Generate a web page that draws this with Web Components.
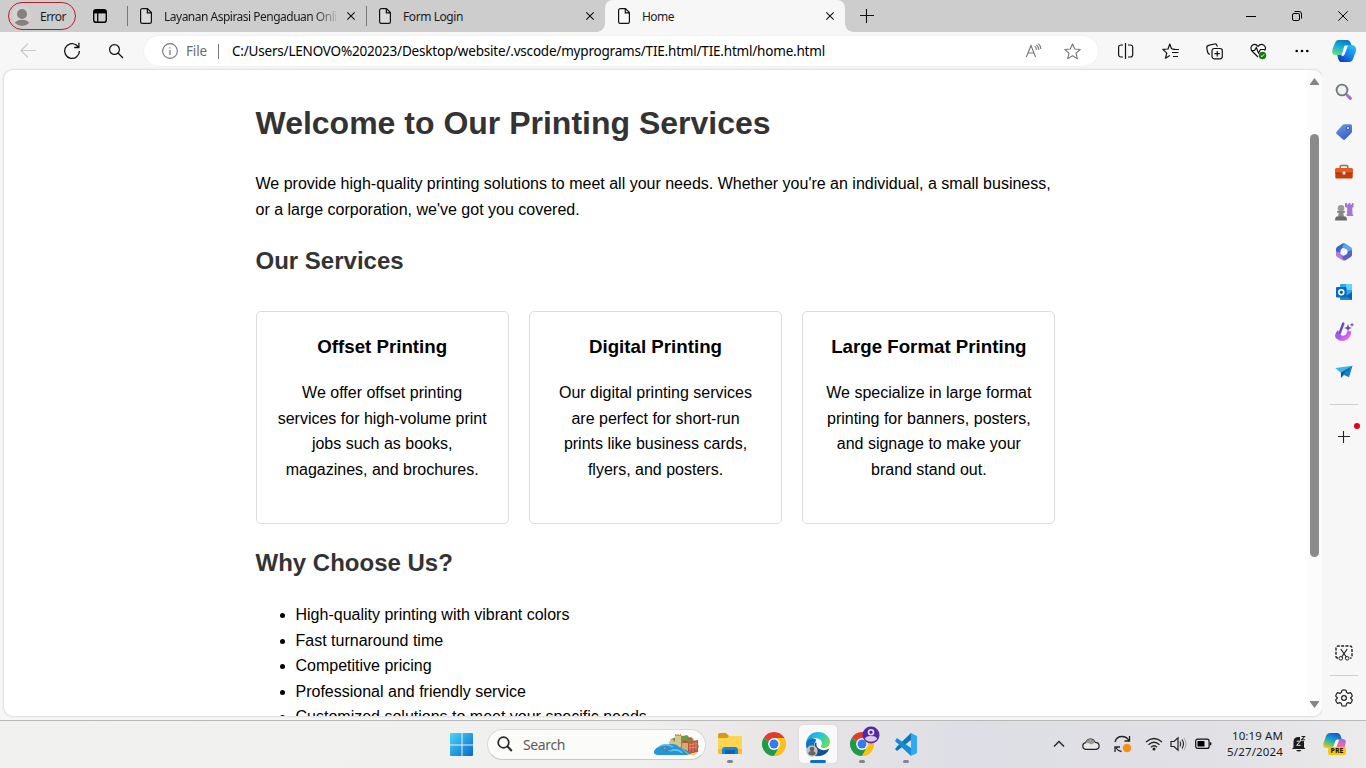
<!DOCTYPE html>
<html lang="en">
<head>
<meta charset="utf-8">
<title>Home</title>
<style>
html,body{margin:0;height:100%;overflow:hidden;background:#f7f7f7}
body{font-family:"Noto Sans","Open Sans",sans-serif;color:#1b1b1b}
</style>
</head>
<body>
<desktop-shell></desktop-shell>
<script>
const ICONS = {
  person: [28,28,`<defs><clipPath id="c"><circle cx="14" cy="14" r="10"/></clipPath></defs><circle cx="14" cy="14" r="10" fill="#d5d2cf"/><g fill="#85817e" clip-path="url(#c)"><circle cx="14" cy="12" r="5"/><ellipse cx="14" cy="22" rx="7.300" ry="4.200"/></g>`],
  tabs: [16,16,`<rect x="1.700" y="1.700" width="12.600" height="12.600" rx="2.400" fill="none" stroke="#000" stroke-width="1.400"/><path d="M2 2h12v3.400H2z"/><path d="M5.700 5v9" stroke="#000" stroke-width="1.300"/>`],
  file: [12,16,`<path d="M2.200.6h5.200l4 4v9.100a1.700 1.700 0 0 1-1.700 1.700H2.300A1.700 1.700 0 0 1 .6 13.700V2.300A1.700 1.700 0 0 1 2.300.6M7.300.8v4h4" fill="#fff" fill-opacity=".3" stroke="#111" stroke-width="1.200"/>`],
  close: [8,8,`<path d="M.3.3l7.400 7.400M7.700.3L.3 7.700" stroke="#111" stroke-width="1.100"/>`],
  wclose: [10,10,`<path d="M.3.3l9.400 9.400M9.700.3L.3 9.700" stroke="#000" stroke-width="1"/>`],
  plus: [14,14,`<path d="M0 6.500h14M6.500 0v14" stroke="#111" stroke-width="1.100"/>`],
  min: [10,10,`<path d="M0 5.500h10" stroke="#000"/>`],
  restore: [10,10,`<rect x=".5" y="2.500" width="7" height="7" rx="1.500" fill="none" stroke="#000"/><path d="M2.500.5H7A2.500 2.500 0 0 1 9.500 3v4.500" fill="none" stroke="#000"/>`],
  back: [16,16,`<path d="M16 7.500H1M8 .5L1 7.500l7 7" fill="none" stroke="#c9c9c9" stroke-width="1.100"/>`],
  reload: [18,18,`<path d="M16.400 9A7.400 7.400 0 1 1 13.300 3M15.900.8v4.700h-4.700M13 2.800l2.800 2.600" fill="none" stroke="#111" stroke-width="1.300"/>`],
  search: [16,16,`<circle cx="6.500" cy="6.500" r="4.900" fill="none" stroke="#111" stroke-width="1.200"/><path d="M10 10l5 5" stroke="#111" stroke-width="1.300"/>`],
  info: [16,16,`<circle cx="8" cy="8" r="7.400" fill="none" stroke="#777" stroke-width="1.100"/><path d="M8 7v5M8 4.200v1.400" stroke="#777" stroke-width="1.200"/>`],
  read: [16,16,`<path d="M1.300 14L6 2.500 10.600 14M3 10h6.200M9.800 3.200q1.700 1.400 1.600 3.800M11.500 1.900q2.400 2 2.300 5.100M13.300.6q2.500 2 2.500 5.400" fill="none" stroke="#777" stroke-width="1.100"/>`],
  star: [17,17,`<path d="M8.500 1l2.200 5 5.500.5-4.200 3.700 1.300 5.400-4.800-2.900-4.800 2.900L5 10.200.8 6.500 6.300 6z" fill="none" stroke="#777" stroke-width="1.100" stroke-linejoin="round"/>`],
  split: [16,16,`<path d="M5 2H3A2.200 2.200 0 0 0 .6 4.200v7.600A2.200 2.200 0 0 0 3 14h2M10 2h2.500a2.200 2.200 0 0 1 2.200 2.200v7.600A2.200 2.200 0 0 1 12.500 14H10M7.500 0v16" fill="none" stroke="#111" stroke-width="1.200"/>`],
  favs: [17,17,`<path d="M9.600 6L7.800 1 6 6 .8 6.400l4 3.700L3.500 15.200 7.800 12.500M9.600 6l3 .2M11 6.500h6M10 9.500h6.500M11 13.500H16" fill="none" stroke="#111" stroke-width="1.200" stroke-linejoin="round"/>`],
  collect: [17,17,`<rect x="6" y="5.500" width="10.300" height="10.300" rx="2.200" fill="none" stroke="#111" stroke-width="1.200"/><path d="M11.200 8v5.400M8.500 10.700h5.400M3.800 11.500Q2 10.700 1.600 9L.8 5Q.5 3 2.600 2.400L8.500 1q2-.4 2.600 1.700l.3.900" fill="none" stroke="#111" stroke-width="1.200"/>`],
  heart: [17,17,`<path d="M8 14L2 8C-1.500 3.500 4.500-1 8 3.300 11.500-1 18 3.500 14.500 7.500M1 7.500h3.500L6.300 4.600 8.500 10l2-3.500H15" fill="none" stroke="#111" stroke-width="1.200"/><circle cx="12.500" cy="12.500" r="3.700" fill="#107c10"/><path d="M10.900 12.700l1.100 1 2.200-2.400" fill="none" stroke="#fff"/>`],
  dots: [14,4,`<circle cx="1.700" cy="2" r="1.300"/><circle cx="7" cy="2" r="1.300"/><circle cx="12.300" cy="2" r="1.300"/>`],
  copilot: [24,24,`<defs><linearGradient id="a" x1=".6" y1="0" x2=".2" y2="1"><stop stop-color="#0878c8"/><stop offset=".45" stop-color="#13afd2"/><stop offset="1" stop-color="#6bdf83"/></linearGradient><linearGradient id="b" x1=".9" y1="0" x2=".2" y2="1"><stop stop-color="#29c5f4"/><stop offset=".6" stop-color="#1679e9"/><stop offset="1" stop-color="#1235c7"/></linearGradient></defs><path d="M6 1h9q3 0 4 4l1 2h-5q-2 0-3 3l-2 6H4Q-1 16 .5 10L3 4q1-3 3-3z" fill="url(#a)"/><path d="M16 6h4q5 1 4 6l-3 8q-1 3-4 3H9q-2 0-3-4l-.6-3H10q2 0 3-3l1.400-5z" fill="url(#b)"/><path d="M13 6.500h3l-3.500 9q-.5 1.500-3 1.500l2-7.500q.4-2 1.500-3z" fill="#fff"/>`],
  sbsearch: [18,18,`<circle cx="7" cy="7" r="5.400" fill="#eef3f6" stroke="#777" stroke-width="1.900"/><path d="M10.800 10.800l2 2" stroke="#777" stroke-width="2"/><path d="M12.700 12.700l2.700 2.700" stroke="#a56bd5" stroke-width="3" stroke-linecap="round"/>`],
  tag: [18,18,`<defs><linearGradient id="a" x2=".5" y2="1"><stop stop-color="#6b9bf0"/><stop offset="1" stop-color="#3c62c8"/></linearGradient></defs><path d="M9.500 1.200h6q1.500 0 1.500 1.500v5.700q0 1-.8 1.800l-6 6q-1.200 1-2.400 0L1.700 11q-1.300-1.300 0-2.600L7.600 2q.8-.8 1.900-.8z" fill="url(#a)"/><circle cx="13" cy="5" r="1.500" fill="#fff" stroke="#263b80" stroke-width=".8"/>`],
  tools: [18,16,`<path d="M5.200 4V2.500q0-1 1-1h5.600q1 0 1 1V4" fill="none" stroke="#777" stroke-width="1.500"/><rect x=".3" y="4" width="17.400" height="10.600" rx="1.500" fill="#cc3b0b"/><path d="M.3 5.500Q.3 4 1.800 4h14.400q1.500 0 1.500 1.500V9H.3z" fill="#e95b1c"/><path d="M.3 9h17.400" stroke="#a83009"/><circle cx="9" cy="9" r="1.700" fill="#bcecf5"/>`],
  chess: [20,20,`<path d="M11 1h2v1.500h1.500V1h2v1.500H18V1h1.500v4l-1.200.8.200 6.200 1 2h-7l.5-2 .3-6.200L11 5z" fill="#a374d9"/><circle cx="7" cy="6.300" r="3.300" fill="#999"/><path d="M3 9h8v1.500l-1.700.5.700 4H4l.7-4L3 10.500z" fill="#878787"/><path d="M2.300 14.500h9.400q1.300 1 1.300 4H1q0-3 1.300-4z" fill="#6a6a6a"/>`],
  m365: [18,18,`<path d="M7.500.6L2.200 3.800Q1 4.600 1 6v5.500q2 .6 4.200-1L5.500 8q0-1.700 1.500-2.500l5.500-3.200L10 .6Q8.700 0 7.500.6z" fill="#3d63cf"/><path d="M10.500.8L16 4.300q1 .8 1 2V9q-1.500 1.800-4.500 1V8q0-1-1-1.700L7.500 4.500q-.5-2.500 3-3.700z" fill="#58a9ec"/><path d="M1 8.500V12q0 1.200 1.200 2l5.300 3.300q1.200.7 2.500 0l1.500-1q-1-2.800-3.500-4L6 11.300Q4.500 8 1 8.500z" fill="#b07ddc"/><path d="M17 7.500V12q0 1.200-1.200 2L10 17.400q-2.500-.8-3-3.700l4.500-2.400q1-.6 1-1.800Q14 7 17 7.500z" fill="#5961c2"/><circle cx="9" cy="9" r="2.700" fill="#f7f7f7"/>`],
  outlook: [18,18,`<path d="M6 1h10q1 0 1 1v14H5V2q0-1 1-1z" fill="#2aa9e8"/><path d="M11 1h5q1 0 1 1v5h-6z" fill="#63d5fa"/><path d="M5 9l7 4 5-4v7q0 1-1 1H6q-1 0-1-1z" fill="#168bd6"/><path d="M17 9l-6 4 6 4z" fill="#0b5fb0"/><rect x="1" y="4" width="10.500" height="10.500" rx="1" fill="#0869bd"/><circle cx="6.300" cy="9.200" r="2.500" fill="none" stroke="#fff" stroke-width="1.500"/>`],
  design: [20,20,`<defs><linearGradient id="a" x1="0" y1="0" x2="1" y2="1"><stop stop-color="#8146dc"/><stop offset=".5" stop-color="#c455ee"/><stop offset="1" stop-color="#ef8af8"/></linearGradient></defs><path d="M4 8Q-.5 12.500 2.500 16.500q4.500 4.300 10.500 1.300 4.500-3 4-8.800l-4 .5q0 3-2.500 4T5 12z" fill="url(#a)"/><path d="M9.300 1.500L5.500 11.500" stroke="#6547d6" stroke-width="2.400" stroke-linecap="round"/><circle cx="4" cy="14" r="2.800" fill="#a05fe4"/><path d="M14 2l1 2.900 2.900 1-2.900 1L14 9.800l-1-2.900-2.900-1 2.900-1zM18 .5l.6 1.700 1.700.6-1.700.6L18 5.100l-.6-1.700-1.700-.6 1.700-.6z" fill="#6046b9"/>`],
  plane: [18,16,`<path d="M.3 4L17.500 1.800 6 9z" fill="#37b8e7"/><path d="M17.500 1.800L6 8.500V14l3-3 5 2.300z" fill="#1681c9"/><path d="M17.500 1.800L6 9v5l2.500-5z" fill="#0a4f89"/>`],
  sbplus: [12,12,`<path d="M0 5.500h12M5.500 0v12" stroke="#222" stroke-width="1.100"/>`],
  snip: [18,18,`<path d="M3 14H2.500Q1 14 1 12.500V4.500Q1 2 3.500 2h11Q17 2 17 4.500v8q0 1.500-1.500 1.500H15" fill="none" stroke="#222" stroke-width="1.400" stroke-dasharray="3 1.300"/><path d="M5.800 5l5.500 8M12.200 5l-5.500 8" stroke="#222" stroke-width="1.200"/><circle cx="5.800" cy="14.300" r="1.800" fill="none" stroke="#222"/><circle cx="12.200" cy="14.300" r="1.800" fill="none" stroke="#222"/>`],
  gear: [18,18,`<path d="M7 1.200Q9 .5 11 1.200l.7 2.400 1.300.8 2.500-.7Q17 5.300 17.300 7.200L15.500 9l1.800 1.800q-.3 2-1.800 3.500l-2.500-.7-1.300.8-.7 2.400q-2 .7-4 0l-.7-2.400-1.300-.8-2.500.7Q1 12.800.7 10.800L2.500 9 .7 7.200Q1 5.200 2.500 3.700l2.500.7 1.300-.8z" fill="none" stroke="#222" stroke-width="1.200" stroke-linejoin="round"/><circle cx="9" cy="9" r="2.400" fill="none" stroke="#222" stroke-width="1.200"/>`],
  start: [24,24,`<defs><linearGradient id="a" gradientUnits="userSpaceOnUse" x1="0" y1="0" x2="24" y2="24"><stop stop-color="#4dd4fb"/><stop offset="1" stop-color="#0065c8"/></linearGradient></defs><path d="M1 0h10.500v11.500H0V1q0-1 1-1zM12.500 0H22q1 0 1 1v10.500H12.500zM0 12.500h11.500V23H1q-1 0-1-1zM12.500 12.500H23V22q0 1-1 1h-9.500z" fill="url(#a)"/>`],
  tsearch: [16,16,`<circle cx="6.500" cy="6.500" r="5.300" fill="none" stroke="#292929" stroke-width="1.700"/><path d="M10.300 10.300l4.500 4.700" stroke="#292929" stroke-width="2"/>`],
  scene: [48,24,`<path d="M16 11l2-5 5-2 4-2 3 1 4-1 4 4 6 3 2 5-5 5H20z" fill="#6d9a46"/><path d="M16 9l3-3 3 3v4h-6zM22 3h6v11h-6z" fill="#d9c28c"/><path d="M22 3V1h1.500v1h1V1H26v1h1V1h1v2z" fill="#ba9c68"/><path d="M29 10h8v8h-8z" fill="#d2aa72"/><path d="M28 10l4-3 5 3zM34 6l4-2 3 3z" fill="#c05235"/><path d="M35 9l10-2v12l-10 2z" fill="#c44f36"/><path d="M36 12l8-1.500M36 15l8-1M37 9.500v9M40 9v10M43 8.500v9" stroke="#f0bc95" stroke-width=".5"/><path d="M1 18Q5 11 19 11q5 0 7 3l9 4 5 4-3 0H6q-6 0-5-4z" fill="#2196d8"/><path d="M24 12l12 9q8 0 10-3-3 5-7 4l-3 0z" fill="#edca74"/><path d="M7 13q7-3 13 1M17 18q8-3 12 2" fill="none" stroke="#67c5ec" stroke-width="1.500"/><path d="M9 15l5-1-2 2zM13 18l5-1.500-2 2z" fill="#fff" stroke="#555" stroke-width=".6"/>`],
  folder: [26,24,`<path d="M1 3q0-2 2-2h6l3 3h11q2 0 2 2v4H1z" fill="#d79b13"/><path d="M1 6h9l2-2h11q2 0 2 2v15q0 1-2 1H3q-2 0-2-1z" fill="#ffd455"/><path d="M1 17h24v4q0 1-2 1H3q-2 0-2-1z" fill="#f5bc32"/><path d="M5 18q0-3 3-3h10q3 0 3 3v4H5z" fill="#1685d8"/><path d="M8 18h10v4H8z" fill="#0865ad"/>`],
  chrome: [24,24,`<path d="M12 12L1.600 6A12 12 0 0 1 22.400 6z" fill="#e33b2e"/><path d="M12 12L22.400 6A12 12 0 0 1 12 24z" fill="#fbc116"/><path d="M1.600 6A12 12 0 0 0 12 24L17.200 15 12 12z" fill="#229a4a"/><path d="M12 6h10.400A12 12 0 0 1 12 24l5.200-9z" fill="#fbc116"/><circle cx="12" cy="12" r="5.900" fill="#fff"/><circle cx="12" cy="12" r="4.500" fill="#327cf0"/>`],
  edge: [26,26,`<defs><linearGradient id="a" x1="0" x2="1" y2=".6"><stop stop-color="#1598dd"/><stop offset=".5" stop-color="#26c2df"/><stop offset="1" stop-color="#68df57"/></linearGradient></defs><path d="M1 14C1 5 7 1 13 1c7 0 12 5 12 10 0 6-9 8-9 4 0-1 1-1 1-3 0-2-3-5-7-5-5 0-8 3-9 7z" fill="url(#a)"/><path d="M1 14C1 8 7 6 10 8c3 1-1 3-1 7 0 5 5 9 8 9-9 4-16-3-16-10z" fill="#0876c4"/><path d="M10 12q-3 9 4 13 7 0 10.500-7.500-5 3-9 1-5-2-4-7z" fill="#154d91"/><circle cx="7" cy="20" r="5.700" fill="#c2c2c2"/><circle cx="7" cy="18" r="2.300" fill="#6b625e"/><path d="M3.300 23q0-3 3.700-3t3.700 3q-3.500 3-7.400 0z" fill="#6b625e"/>`],
  badge: [18,18,`<circle cx="9" cy="9" r="8.500" fill="#5228a4"/><circle cx="9" cy="6.200" r="2.500" fill="#5228a4" stroke="#e9dcff" stroke-width="1.600"/><path d="M3 13.200q0-3.200 6-3.200t6 3.200q-6 5-12 0z" fill="#d9c8f0"/>`],
  code: [25,25,`<path d="M17 1L3 14.500 1 17l2 2L17 8z" fill="#0878bd"/><path d="M3 6l14 10v8L1 9z" fill="#118fd6"/><path d="M17 1l6 3v17l-6 3z" fill="#30a9f2"/>`],
  chev: [12,8,`<path d="M1 6.500L6 1.500l5 5" fill="none" stroke="#222" stroke-width="1.400"/>`],
  cloud: [18,14,`<path d="M4 12.300Q.7 12 .8 8.700.9 6.300 3.600 5.700q2-4.500 6-3.500 2.500.5 3.500 3.200 4 0 4 3.700-.2 3.200-3.500 3.200z" fill="#e9e9e9" stroke="#222" stroke-width="1.200"/><path d="M3.500 6Q5.500 1.500 9 2q3 .5 4 3.500l-3.500 2Q7.500 5.500 3.500 6z" fill="#999"/>`],
  sync: [20,20,`<path d="M2 8Q3.500 2.500 9 2.500q4.500 0 7 4M16.500 2v5h-5M8.500 17.500q-3.500-.5-5.500-3.500M2 18v-5h5" fill="none" stroke="#222" stroke-width="1.300"/><circle cx="14" cy="14" r="4.200" fill="#f7910c"/>`],
  wifi: [18,14,`<g fill="none" stroke="#222" stroke-width="1.300"><path d="M1 5q8-7 16 0M3.500 7.800q5.500-5 11 0M6 10.200q3-2.800 6 0"/></g><circle cx="9" cy="12" r="1.500" fill="#222"/>`],
  volume: [17,16,`<path d="M1 5.500h3l4-3.700v12.400l-4-3.700H1z" fill="none" stroke="#222" stroke-width="1.200"/><path d="M10 5.500q1.500 2.500 0 5M12 3.500q3 4.500 0 9" fill="none" stroke="#222" stroke-width="1.100"/><path d="M14 1.800q4 6 0 12.400" fill="none" stroke="#aaa"/>`],
  battery: [17,12,`<rect x=".7" y="1.200" width="13.400" height="9.200" rx="2" fill="none" stroke="#111" stroke-width="1.200"/><rect x="2.500" y="3" width="7" height="5.600" rx=".7"/><path d="M15.500 4.300v3" stroke="#111" stroke-width="1.600"/>`],
  bell: [16,18,`<path d="M1 14l1.500-1.800V7q0-5 5-5H9v4h4v6.200l1.500 1.800z" fill="#1c1c1c"/><path d="M5 15h5.500q-2.700 3-5.500 0z" fill="#1c1c1c"/><path d="M5.700 6.200h3.500L5.700 10.300h4" fill="none" stroke="#fff" stroke-width=".9"/><path d="M10.500 1.500h3l-3 3.300h3.500" fill="none" stroke="#222" stroke-width="1.100"/>`],
  copilotpre: [26,26,`<defs><linearGradient id="a" x1=".7" x2=".2" y2="1"><stop stop-color="#1454d0"/><stop offset=".4" stop-color="#1299d5"/><stop offset=".7" stop-color="#58c472"/><stop offset="1" stop-color="#f1c42d"/></linearGradient><linearGradient id="b" x1=".6" x2=".2" y2="1"><stop stop-color="#a965ed"/><stop offset=".5" stop-color="#ed68a4"/><stop offset="1" stop-color="#ff8b50"/></linearGradient></defs><path d="M8 2h7q3 0 4 4l.7 2H16q-2 0-3 3l-2 6H4q-4 0-2.500-5L4 5q1-3 4-3z" fill="url(#a)"/><path d="M16 8h4q5 0 3.500 5l-1.500 5H7l3-1q2 0 3-3z" fill="url(#b)"/><path d="M14 9h3l-3 8h-3z" fill="#fff"/>`]
};
function define(name, html, setup){
  const t=document.createElement('template'); t.innerHTML=html;
  customElements.define(name, class extends HTMLElement{
    constructor(){ super(); this.attachShadow({mode:'open'}).append(t.content.cloneNode(true)); }
    connectedCallback(){ if(setup) setup(this,this.shadowRoot); }
  });
}
define('ui-icon','<style>:host{display:inline-flex;flex:none}svg{display:block;overflow:visible}</style><span></span>',(el,root)=>{
  const [w,h,body]=ICONS[el.getAttribute('name')];
  root.querySelector('span').innerHTML=`<svg width="${w}" height="${h}" viewBox="0 0 ${w} ${h}">${body}</svg>`;
});
/* A one-line label whose tracking is set so that it spans a given width. */
define('fit-label','<style>:host{display:inline-block;white-space:nowrap;flex:none}</style><span><slot></slot></span>',(el,root)=>{
  const span=root.querySelector('span'), n=el.textContent.length;
  span.style.letterSpacing=(Number(el.getAttribute('span'))-span.getBoundingClientRect().width)/n+'px';
});
define('browser-tab',`<style>
:host{display:flex;box-sizing:border-box;width:239px;height:32px;align-items:center;padding:0 11px 0 12px;font-size:12px;position:relative;border-left:1px solid transparent}
:host([rule])::before{content:"";position:absolute;left:-1px;top:6px;height:20px;border-left:1px solid #777}
:host([active]){width:240px;background:#f7f7f7;border-radius:8px 8px 0 0}
:host([active])::before,:host([active])::after{content:"";position:absolute;bottom:0;width:8px;height:8px}
:host([active])::before{left:-9px;background:radial-gradient(circle at 0 0,transparent 7.500px,#f7f7f7 8px)}
:host([active])::after{right:-8px;background:radial-gradient(circle at 100% 0,transparent 7.500px,#f7f7f7 8px)}
.t{flex:1;margin:0 11px 0 12px;overflow:hidden;white-space:nowrap}
:host([fade]) .t{-webkit-mask-image:linear-gradient(90deg,#000 150px,transparent 176px)}
</style><ui-icon name="file"></ui-icon><div class="t"><slot></slot></div><ui-icon name="close"></ui-icon>`);
define('tab-strip',`<style>
:host{display:flex;height:32px;background:#cdcdcd;align-items:center}
.pill{box-sizing:border-box;width:68px;height:28px;border:1px solid #b51f2b;border-radius:14px;margin-left:8px;display:flex;align-items:center;font-size:12px}
.pill ui-icon{margin-left:-1px}.pill fit-label{margin-left:4px}
.act{width:48px;margin-right:3px;display:flex;justify-content:center}
.plus{width:43px;display:flex;justify-content:center}
.win{margin-left:auto;display:flex}.win span{width:46px;display:flex;justify-content:center}
</style><div class="pill"><ui-icon name="person"></ui-icon><fit-label span="26">Error</fit-label></div><div class="act"><ui-icon name="tabs"></ui-icon></div>
<browser-tab rule fade><fit-label span="186">Layanan Aspirasi Pengaduan Online</fit-label></browser-tab><browser-tab rule><fit-label span="60">Form Login</fit-label></browser-tab><browser-tab active><fit-label span="32">Home</fit-label></browser-tab>
<div class="plus"><ui-icon name="plus"></ui-icon></div><div class="win"><span><ui-icon name="min"></ui-icon></span><span><ui-icon name="restore"></ui-icon></span><span><ui-icon name="wclose"></ui-icon></span></div>`);
define('nav-bar',`<style>
:host{display:flex;height:38px;background:#f7f7f7;align-items:center;padding-left:6px}
.c{width:44px;display:flex;justify-content:center;flex:none}.last{width:40px}
.addr{box-sizing:border-box;width:954px;height:30px;border-radius:15px;background:#fff;margin:0 6px;display:flex;align-items:center;padding:0 17px 0 18px;font-size:13.500px;box-shadow:0 0 2px #e5e5e5;color:#000}
.file{color:#6b6b6b;margin-left:8px}.bar{height:15px;border-left:1px solid #777;margin:0 13px 0 11px}
.addr .r{margin-left:auto;display:flex;gap:23px;align-items:center}
</style><span class="c"><ui-icon name="back"></ui-icon></span><span class="c"><ui-icon name="reload"></ui-icon></span><span class="c"><ui-icon name="search"></ui-icon></span>
<div class="addr"><ui-icon name="info"></ui-icon><fit-label class="file" span="21">File</fit-label><i class="bar"></i><fit-label span="593">C:/Users/LENOVO%202023/Desktop/website/.vscode/myprograms/TIE.html/TIE.html/home.html</fit-label><div class="r"><ui-icon name="read"></ui-icon><ui-icon name="star"></ui-icon></div></div>
<span class="c"><ui-icon name="split"></ui-icon></span><span class="c"><ui-icon name="favs"></ui-icon></span><span class="c"><ui-icon name="collect"></ui-icon></span><span class="c"><ui-icon name="heart"></ui-icon></span><span class="c"><ui-icon name="dots"></ui-icon></span><span class="c last"><ui-icon name="copilot"></ui-icon></span>`);
define('service-card',`<style>
:host{display:block;flex:1;box-sizing:border-box;height:213px;border:1px solid #ddd;border-radius:5px;padding:20px 20px 0;text-align:center}
h3{margin:0 0 18.220px;font-size:18.720px}p{margin:0}
</style><h3><slot name="title"></slot></h3><p><slot></slot></p>`);
define('print-page',`<style>
:host{display:block;flex:1;min-width:0;overflow:hidden;font:16px/1.6 "Liberation Sans",Arial,sans-serif;color:#000}
main{width:800px;margin:0 auto;padding-top:28px}
h1,h2{color:#333}h1{font-size:32px;margin:0 0 22px}h2{font-size:24px;margin:19.560px 0 19.920px}
p{margin:0}.cards{display:flex;gap:20px;margin-top:30.600px}.cards+h2{margin-top:19.920px}ul{margin:-.2px 0 0;padding-left:40px}
</style><main><h1>Welcome to Our Printing Services</h1><p>We provide high-quality printing solutions to meet all your needs. Whether you're an individual, a small business, or a large corporation, we've got you covered.</p><h2>Our Services</h2>
<div class="cards"><service-card><span slot="title">Offset Printing</span>We offer offset printing services for high-volume print jobs such as books, magazines, and brochures.</service-card><service-card><span slot="title">Digital Printing</span>Our digital printing services are perfect for short-run prints like business cards, flyers, and posters.</service-card><service-card><span slot="title">Large Format Printing</span>We specialize in large format printing for banners, posters, and signage to make your brand stand out.</service-card></div>
<h2>Why Choose Us?</h2><ul><li>High-quality printing with vibrant colors</li><li>Fast turnaround time</li><li>Competitive pricing</li><li>Professional and friendly service</li><li>Customized solutions to meet your specific needs</li></ul></main>`);
define('scroll-bar',`<style>:host{display:flex;flex-direction:column;align-items:center;box-sizing:border-box;width:15px;background:#fcfcfc;padding:8px 0}
i{width:9px;height:423px;border-radius:5px;background:#8b8b8b;margin-top:49px}svg{display:block}.d{margin-top:auto}</style>
<svg width="9" height="7"><path d="M4.500 0L9 6v1H0V6z" fill="#858585"/></svg><i></i><svg class="d" width="9" height="7"><path d="M4.500 7L9 1V0H0v1z" fill="#858585"/></svg>`);
define('side-bar',`<style>
:host{display:flex;flex-direction:column;align-items:center;width:44px;height:650px;background:#f7f7f7;padding-top:2.400px;box-sizing:border-box}
span{height:40px;width:44px;display:flex;align-items:center;justify-content:center;position:relative}
hr{width:28px;border:0;height:1px;background:#cfcfcf;margin:0}
.a{margin-top:11.600px}.p{margin-top:12px}.dot{position:absolute;right:6px;top:6px;width:6px;height:6px;border-radius:50%;background:#e60012}
.b{margin-top:auto;height:44px}.g{height:44px}
</style><span><ui-icon name="sbsearch"></ui-icon></span><span><ui-icon name="tag"></ui-icon></span><span><ui-icon name="tools"></ui-icon></span><span><ui-icon name="chess"></ui-icon></span><span><ui-icon name="m365"></ui-icon></span><span><ui-icon name="outlook"></ui-icon></span><span><ui-icon name="design"></ui-icon></span><span><ui-icon name="plane"></ui-icon></span><hr class="a"><span class="p"><ui-icon name="sbplus"></ui-icon><i class="dot"></i></span><span class="b"><ui-icon name="snip"></ui-icon></span><hr><span class="g"><ui-icon name="gear"></ui-icon></span>`);
define('task-app',`<style>:host{display:flex;box-sizing:border-box;width:38px;height:38px;margin:0 3px;align-items:center;justify-content:center;position:relative;border-radius:4px}
:host([active]){background:#faf9f9;box-shadow:0 0 1px #bbb}
:host([open])::after{content:"";position:absolute;bottom:0;left:16px;width:6px;height:3px;border-radius:2px;background:#858585}
:host([active])::after{left:11px;width:16px;background:#0870cf}
.n{position:absolute;right:1px;top:1px}</style><slot></slot><div class="n"><slot name="badge"></slot></div>`);
define('task-bar',`<style>
:host{display:flex;box-sizing:border-box;height:48px;border-top:1px solid #b9b9b9;background:linear-gradient(90deg,#f1f1ef 0,#f0f0ee 47%,#e8e4e5 58%,#dedfe6 70%,#e0e0e5 88%,#ebebeb 100%);align-items:center;padding:0 0 1px 450px;position:relative}
.s{box-sizing:border-box;width:219px;height:31px;border:1px solid #d9d9d9;border-bottom-color:#c9c9c9;border-radius:16px;background:#fbfbfa;margin:0 2px 0 13px;display:flex;align-items:center;padding:0 4px 0 9px;font-size:14px;color:#5b5b5b}
.s fit-label{margin-left:10px}.s .v{margin-left:auto;margin-top:2px}
.tray{margin-left:auto;display:flex;align-items:center;margin-right:18px}
.x{display:flex;justify-content:center}
.time{width:62px;font-size:11.500px;line-height:16px;text-align:right;margin-left:5px}
.cp{position:relative;margin-left:15px;display:flex}.pre{position:absolute;left:6px;bottom:2px;background:#fdc600;border-radius:2px;width:18px;height:8px;font:bold 7px/8px "Open Sans",sans-serif;text-align:center;color:#111}
</style><ui-icon name="start" style="margin-top:1px"></ui-icon><div class="s"><ui-icon name="tsearch"></ui-icon><fit-label span="42">Search</fit-label><ui-icon class="v" name="scene"></ui-icon></div>
<task-app open><ui-icon name="folder"></ui-icon></task-app><task-app><ui-icon name="chrome"></ui-icon></task-app><task-app open active><ui-icon name="edge"></ui-icon></task-app><task-app open><ui-icon name="chrome"></ui-icon><ui-icon slot="badge" name="badge"></ui-icon></task-app><task-app open><ui-icon name="code"></ui-icon></task-app>
<div class="tray"><span class="x" style="width:32px"><ui-icon name="chev"></ui-icon></span><span class="x" style="width:32px"><ui-icon name="cloud"></ui-icon></span><span class="x" style="width:32px"><ui-icon name="sync"></ui-icon></span><span class="x" style="width:30px"><ui-icon name="wifi"></ui-icon></span><span class="x" style="width:18px"><ui-icon name="volume"></ui-icon></span><span class="x" style="width:26px;margin-left:3px"><ui-icon name="battery"></ui-icon></span><div class="time"><fit-label span="51">10:19 AM</fit-label><br><fit-label span="56">5/27/2024</fit-label></div><ui-icon name="bell" style="margin-left:8px"></ui-icon><div class="cp"><ui-icon name="copilotpre"></ui-icon><span class="pre">PRE</span></div></div>`);
define('desktop-shell',`<style>
:host{display:grid;grid-template-rows:32px 38px 650px 48px;width:1366px;height:768px;overflow:hidden}
.mid{display:flex;background:#f7f7f7;min-height:0}.view{box-sizing:border-box;width:1318px;height:646px;margin-left:4px;background:#fff;border-radius:9px;overflow:hidden;display:flex;box-shadow:0 0 2px 1px #dcdcdc}
.mid side-bar{margin-left:auto}
</style><tab-strip></tab-strip><nav-bar></nav-bar><div class="mid"><div class="view"><print-page></print-page><scroll-bar></scroll-bar></div><side-bar></side-bar></div><task-bar></task-bar>`);
</script>
</body>
</html>
